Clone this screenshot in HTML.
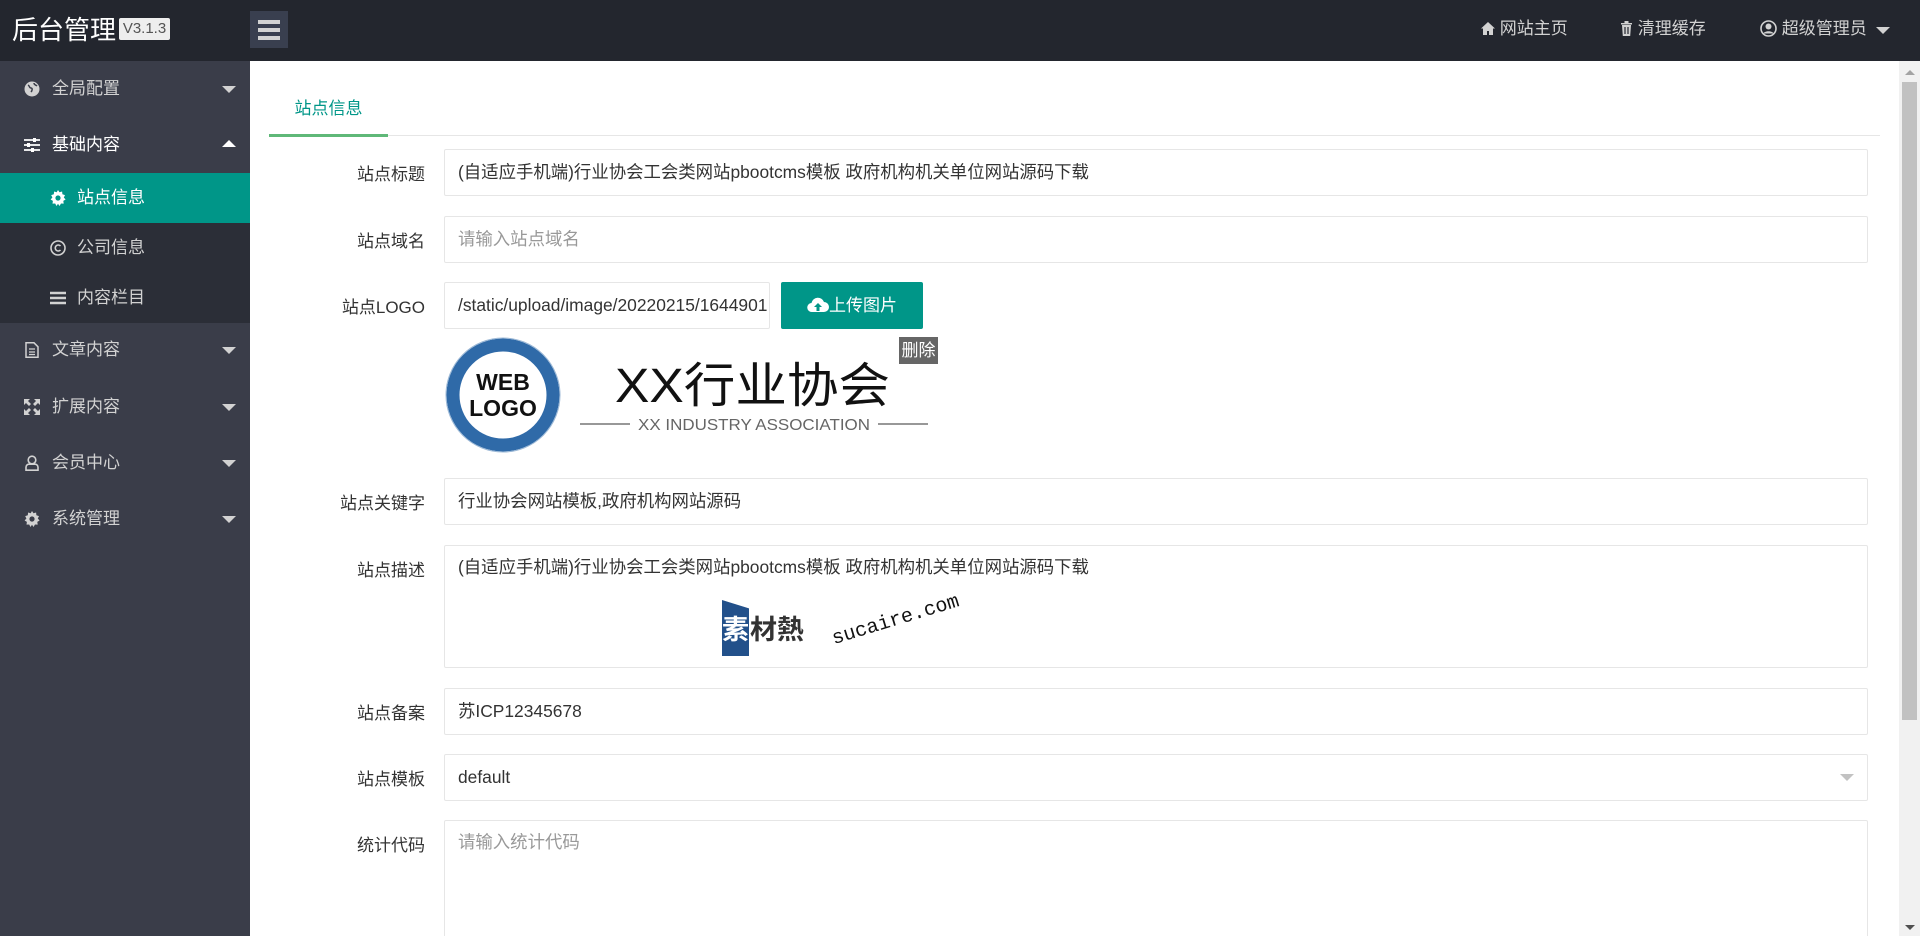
<!DOCTYPE html>
<html style="width:1920px;height:936px;overflow:hidden"><head><meta charset="utf-8">
<style>
*{margin:0;padding:0;box-sizing:border-box}
body{width:1920px;height:936px;overflow:hidden;background:#fff;font-family:"Liberation Sans","Noto Sans CJK SC",sans-serif;font-size:17px;color:#333;position:relative}
.a{position:absolute}
#hd{left:0;top:0;width:1920px;height:61px;background:#23262e}
#sb{left:0;top:61px;width:250px;height:875px;background:#3a3d49}
.mi{position:absolute;left:0;width:250px;height:56px;line-height:56px;color:#d2d2d2;font-size:17px}
.mi .t{position:absolute;left:52px}
.mi .ic{position:absolute;left:24px;top:20px;width:16px;height:16px}
.mi .car{position:absolute;right:14px;top:25px;width:0;height:0;border-left:7px solid transparent;border-right:7px solid transparent;border-top:7px solid #d2d2d2}
.mi .up{border-top:none;border-bottom:7px solid #fff;top:23px}
.sub{position:absolute;left:0;width:250px;height:50px;line-height:50px;color:#d2d2d2}
.sub .t{position:absolute;left:77px}
.sub .ic{position:absolute;left:50px;top:17px;width:16px;height:16px}
.lb{position:absolute;right:1495px;width:200px;text-align:right;color:#333}
.in{position:absolute;left:444px;width:1424px;height:47px;border:1px solid #e6e6e6;border-radius:2px;background:#fff;padding-left:13px;line-height:45px;color:#333;font-size:17.4px}
.ph{color:#999}
</style></head><body>
<div id="hd" class="a">
 <div class="a" style="left:12px;top:12px;color:#fff;font-size:26px;line-height:36px">后台管理</div>
 <div class="a" style="left:119px;top:18px;width:51px;height:22px;background:#eee;color:#555;font-size:15px;line-height:22px;text-align:center;border-radius:2px">V3.1.3</div>
 <div class="a" style="left:250px;top:11px;width:38px;height:37px;background:#393f4f">
  <div class="a" style="left:8px;top:9px;width:22px;height:4px;background:#d2d2d2"></div>
  <div class="a" style="left:8px;top:17px;width:22px;height:4px;background:#d2d2d2"></div>
  <div class="a" style="left:8px;top:25px;width:22px;height:4px;background:#d2d2d2"></div>
 </div>
 <div class="a" style="left:1481px;top:17px;color:#d2d2d2;font-size:17px;line-height:24px"><svg width="14" height="13" viewBox="0 0 14 13" style="vertical-align:-1px"><path d="M7 0L0 6.5h2V13h4V9h2v4h4V6.5h2z" fill="#d2d2d2"/></svg> 网站主页</div>
 <div class="a" style="left:1620px;top:17px;color:#d2d2d2;font-size:17px;line-height:24px"><svg width="13" height="15" viewBox="0 0 13 15" style="vertical-align:-2px"><path d="M1 2h11v1.5H1zM4.5 0h4v2h-4zM2 4h9l-.8 11H2.8z" fill="#d2d2d2"/><path d="M5 6v7M8 6v7" stroke="#23262e" stroke-width="1.2"/></svg> 清理缓存</div>
 <div class="a" style="left:1760px;top:17px;color:#d2d2d2;font-size:17px;line-height:24px"><svg width="17" height="17" viewBox="0 0 17 17" style="vertical-align:-3px"><circle cx="8.5" cy="8.5" r="7.5" fill="none" stroke="#d2d2d2" stroke-width="1.6"/><circle cx="8.5" cy="6.5" r="3" fill="#d2d2d2"/><path d="M3.5 13.5c1-3 9-3 10 0" fill="#d2d2d2"/></svg> 超级管理员</div>
 <div class="a" style="left:1876px;top:27px;border-left:7px solid transparent;border-right:7px solid transparent;border-top:7px solid #d2d2d2"></div>
</div>
<div id="sb" class="a">
 <div class="mi" style="top:0"><svg class="ic" viewBox="0 0 16 16"><circle cx="8" cy="8" r="7.5" fill="#d2d2d2"/><path d="M4 4c2 1 1 3 3 3s1 3 0 4M10 2c0 2 2 2 3 3" stroke="#3a3d49" stroke-width="1.5" fill="none"/></svg><span class="t">全局配置</span><span class="car"></span></div>
 <div class="mi" style="top:56px;color:#fff"><svg class="ic" viewBox="0 0 16 16"><path d="M0 3h16M0 8h16M0 13h16" stroke="#fff" stroke-width="1.8"/><rect x="9" y="1" width="3" height="4" fill="#fff"/><rect x="3" y="6" width="3" height="4" fill="#fff"/><rect x="7" y="11" width="3" height="4" fill="#fff"/></svg><span class="t">基础内容</span><span class="car up"></span></div>
 <div class="a" style="left:0;top:112px;width:250px;height:150px;background:#2b2e37"></div>
 <div class="sub" style="top:112px;background:#009688;color:#fff"><svg class="ic" viewBox="0 0 16 16"><path d="M8 0l1.5 2.3 2.6-.8.3 2.7 2.6.9-1.2 2.4 1.8 2-2.3 1.4.4 2.7-2.7-.1L9.5 16 8 13.8 6.5 16l-1.3-2.5-2.7.1.4-2.7L.6 9.5l1.8-2L1.2 5.1l2.6-.9.3-2.7 2.6.8z" fill="#fff"/><circle cx="8" cy="8" r="2.6" fill="#009688"/></svg><span class="t">站点信息</span></div>
 <div class="sub" style="top:162px"><svg class="ic" viewBox="0 0 16 16"><circle cx="8" cy="8" r="7" fill="none" stroke="#d2d2d2" stroke-width="1.6"/><path d="M10.5 6A3 3 0 1 0 10.5 10" fill="none" stroke="#d2d2d2" stroke-width="1.6"/></svg><span class="t">公司信息</span></div>
 <div class="sub" style="top:212px"><svg class="ic" viewBox="0 0 16 16"><path d="M0 3h16M0 8h16M0 13h16" stroke="#d2d2d2" stroke-width="2.4"/></svg><span class="t">内容栏目</span></div>
 <div class="mi" style="top:261px"><svg class="ic" viewBox="0 0 16 16"><path d="M2 .8h8l4 4V15.2H2z" fill="none" stroke="#d2d2d2" stroke-width="1.5"/><path d="M5 7h6M5 10h6M5 12.5h6" stroke="#d2d2d2" stroke-width="1.3"/></svg><span class="t">文章内容</span><span class="car"></span></div>
 <div class="mi" style="top:318px"><svg class="ic" viewBox="0 0 16 16"><path d="M0 0h6L4 2l3 3-2 2-3-3-2 2zM16 0v6l-2-2-3 3-2-2 3-3-2-2zM0 16v-6l2 2 3-3 2 2-3 3 2 2zM16 16h-6l2-2-3-3 2-2 3 3 2-2z" fill="#d2d2d2"/></svg><span class="t">扩展内容</span><span class="car"></span></div>
 <div class="mi" style="top:374px"><svg class="ic" viewBox="0 0 16 16"><circle cx="8" cy="5" r="3.8" fill="none" stroke="#d2d2d2" stroke-width="1.6"/><path d="M2 15.2v-3a3 3 0 0 1 3-3h6a3 3 0 0 1 3 3v3z" fill="none" stroke="#d2d2d2" stroke-width="1.6"/></svg><span class="t">会员中心</span><span class="car"></span></div>
 <div class="mi" style="top:430px"><svg class="ic" viewBox="0 0 16 16"><path d="M8 0l1.5 2.3 2.6-.8.3 2.7 2.6.9-1.2 2.4 1.8 2-2.3 1.4.4 2.7-2.7-.1L9.5 16 8 13.8 6.5 16l-1.3-2.5-2.7.1.4-2.7L.6 9.5l1.8-2L1.2 5.1l2.6-.9.3-2.7 2.6.8z" fill="#d2d2d2"/><circle cx="8" cy="8" r="2.6" fill="#3a3d49"/></svg><span class="t">系统管理</span><span class="car"></span></div>
</div>

<div class="a" style="left:269px;top:135px;width:1611px;height:1px;background:#e6e6e6"></div>
<div class="a" style="left:269px;top:134px;width:119px;height:3px;background:#5fb878"></div>
<div class="a" style="left:269px;top:96px;width:119px;text-align:center;color:#009688;font-size:17px;line-height:26px">站点信息</div>

<div class="lb" style="top:160px">站点标题</div>
<div class="in" style="top:149px">(自适应手机端)行业协会工会类网站pbootcms模板 政府机构机关单位网站源码下载</div>
<div class="lb" style="top:227px">站点域名</div>
<div class="in ph" style="top:216px">请输入站点域名</div>
<div class="lb" style="top:293px">站点LOGO</div>
<div class="in" style="top:282px;width:326px;overflow:hidden;white-space:nowrap;padding-right:0">/static/upload/image/20220215/1644901</div>
<div class="a" style="left:781px;top:282px;width:142px;height:47px;background:#009688;border-radius:2px;color:#fff;line-height:47px;text-align:center"><svg width="22" height="16" viewBox="0 0 22 16" style="vertical-align:-2px"><path d="M5 15a4.5 4.5 0 0 1-.5-9A6.5 6.5 0 0 1 17 5a5 5 0 0 1 0 10z" fill="#fff"/><path d="M11 6l-4 4h2.5v4h3v-4H15z" fill="#009688"/></svg>上传图片</div>

<svg class="a" style="left:440px;top:332px" width="500" height="125" viewBox="0 0 500 125">
 <circle cx="63" cy="63" r="50" fill="#fff" stroke="#2f6aa8" stroke-width="13"/>
 <circle cx="63" cy="63" r="57" fill="none" stroke="#9bb8d6" stroke-width="1"/>
 <text x="63" y="58" text-anchor="middle" font-family="Liberation Sans,sans-serif" font-weight="bold" font-size="23" fill="#111">WEB</text>
 <text x="63" y="84" text-anchor="middle" font-family="Liberation Sans,sans-serif" font-weight="bold" font-size="23" fill="#111">LOGO</text>
 <text x="175" y="70" font-family="Liberation Sans,Noto Sans CJK SC,sans-serif" font-size="48" fill="#111" textLength="275" lengthAdjust="spacingAndGlyphs">XX行业协会</text>
 <line x1="140" y1="92" x2="190" y2="92" stroke="#777" stroke-width="1.5"/>
 <line x1="438" y1="92" x2="488" y2="92" stroke="#777" stroke-width="1.5"/>
 <text x="314" y="98" text-anchor="middle" font-family="Liberation Sans,sans-serif" font-size="16" fill="#666" textLength="232" lengthAdjust="spacingAndGlyphs">XX INDUSTRY ASSOCIATION</text>
</svg>
<div class="a" style="left:899px;top:337px;width:39px;height:27px;background:#666;color:#fff;font-size:17px;line-height:27px;text-align:center">删除</div>

<div class="lb" style="top:489px">站点关键字</div>
<div class="in" style="top:478px">行业协会网站模板,政府机构网站源码</div>
<div class="lb" style="top:556px">站点描述</div>
<div class="in" style="top:545px;height:123px;line-height:26px;padding-top:8px">(自适应手机端)行业协会工会类网站pbootcms模板 政府机构机关单位网站源码下载</div>
<div class="a" style="left:722px;top:600px;width:27px;height:56px;background:#22508a;clip-path:polygon(0 0,100% 15%,100% 100%,0 100%)"></div>
<div class="a" style="left:722px;top:608px;color:#fff;font-size:27px;font-weight:bold;line-height:40px;font-family:'Noto Sans CJK SC',sans-serif">素</div>
<div class="a" style="left:750px;top:608px;color:#333;font-size:27px;font-weight:bold;line-height:40px;font-family:'Noto Sans CJK SC',sans-serif">材熱</div>
<div class="a" style="left:836px;top:628px;color:#111;font-size:20px;font-family:'Liberation Mono',monospace;transform:rotate(-17deg);transform-origin:0 100%">sucaire.com</div>

<div class="lb" style="top:699px">站点备案</div>
<div class="in" style="top:688px">苏ICP12345678</div>
<div class="lb" style="top:765px">站点模板</div>
<div class="in" style="top:754px">default</div>
<div class="a" style="left:1840px;top:774px;border-left:7px solid transparent;border-right:7px solid transparent;border-top:7px solid #c2c2c2"></div>
<div class="lb" style="top:831px">统计代码</div>
<div class="in ph" style="top:820px;height:125px;line-height:26px;padding-top:8px">请输入统计代码</div>

<div class="a" style="left:1899px;top:61px;width:21px;height:875px;background:#f1f1f1"></div>
<div class="a" style="left:1905px;top:70px;border-left:5px solid transparent;border-right:5px solid transparent;border-bottom:5px solid #a3a3a3"></div>
<div class="a" style="left:1902px;top:82px;width:15px;height:638px;background:#c1c1c1"></div>
<div class="a" style="left:1905px;top:925px;border-left:5px solid transparent;border-right:5px solid transparent;border-top:5px solid #505050"></div>
</body></html>
